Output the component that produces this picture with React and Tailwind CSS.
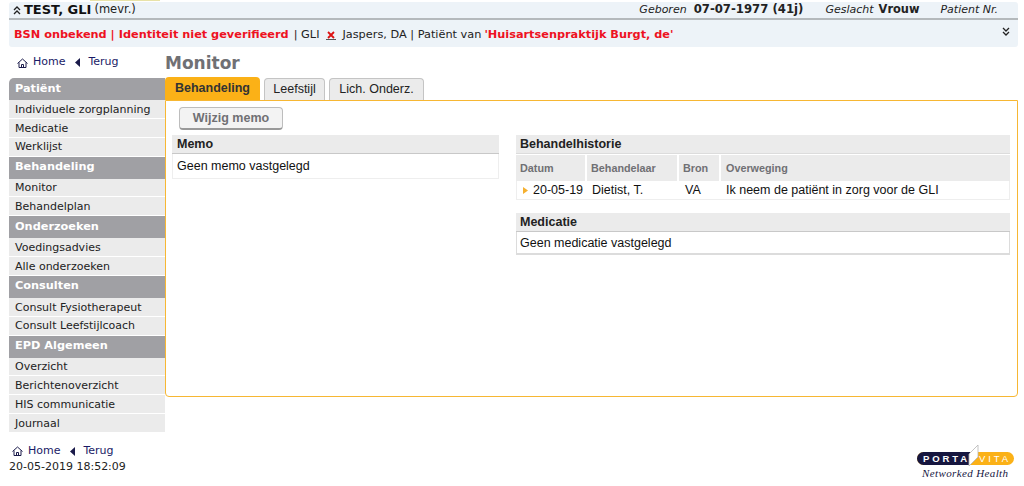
import React from "react";

const verdana = "font-['DejaVu_Sans',sans-serif]";
const arial = "font-['Liberation_Sans',Arial,sans-serif]";

const HomeIcon = () => (
  <svg width="11" height="10" viewBox="0 0 11 10" fill="none" stroke="#1a1a4a" strokeWidth="1">
    <path d="M0.5 5.5 L5.5 1 L10.5 5.5" />
    <path d="M2 4.5 V9.5 H9 V4.5" />
    <path d="M4.5 9.5 V6.5 H6.5 V9.5" />
  </svg>
);

const BackIcon = () => (
  <svg width="5" height="9" viewBox="0 0 5 9" fill="#1a1a4a"><path d="M5 0 V9 L0 4.5 Z" /></svg>
);

const Chevrons = ({ up }) => (
  <svg width="8" height="9" viewBox="0 0 8 9" fill="none" stroke="#222" strokeWidth="1.3">
    {up ? (
      <>
        <path d="M1 4 L4 1 L7 4" />
        <path d="M1 8 L4 5 L7 8" />
      </>
    ) : (
      <>
        <path d="M1 1 L4 4 L7 1" />
        <path d="M1 5 L4 8 L7 5" />
      </>
    )}
  </svg>
);

const nav = [
  ["Patiënt", ["Individuele zorgplanning", "Medicatie", "Werklijst"]],
  ["Behandeling", ["Monitor", "Behandelplan"]],
  ["Onderzoeken", ["Voedingsadvies", "Alle onderzoeken"]],
  ["Consulten", ["Consult Fysiotherapeut", "Consult Leefstijlcoach"]],
  ["EPD Algemeen", ["Overzicht", "Berichtenoverzicht", "HIS communicatie", "Journaal"]],
];

const Links = ({ className }) => (
  <div className={`flex items-center text-[11px] text-[#1a1a66] ${verdana} ${className}`}>
    <HomeIcon />
    <span className="ml-[5px]">Home</span>
    <span className="ml-[10px]"><BackIcon /></span>
    <span className="ml-[8px]">Terug</span>
  </div>
);

const Logo = () => (
  <svg width="98" height="36" viewBox="0 0 98 36">
    <rect x="0" y="8" width="97" height="13" rx="6.5" fill="#fbb117" />
    <path d="M6.5 8 H53 V21 H6.5 A6.5 6.5 0 0 1 6.5 8 Z" fill="#16163f" />
    <path d="M52 10 L61 1 V13 L52 22 Z" fill="#ffffff" stroke="#b5b5b5" strokeWidth="0.8" />
    <text x="6" y="18" fontFamily="Liberation Sans, sans-serif" fontSize="9.5" fontWeight="700" textLength="44" fill="#fff">PORTA</text>
    <text x="62" y="18" fontFamily="Liberation Sans, sans-serif" fontSize="9.5" textLength="29" fill="#fff">VITA</text>
    <text x="5" y="33" fontFamily="Liberation Serif, serif" fontStyle="italic" fontSize="11" textLength="86" fill="#16163f">Networked Health</text>
  </svg>
);

export default function App() {
  return (
    <div className={`w-[1024px] h-[486px] bg-white overflow-hidden relative text-[#222] ${verdana}`}>
      <div className="absolute left-[90px] top-0 w-[70px] h-px bg-[#e8e2a8]" />
      <div className="ml-[9px] mr-[6px] pt-[2px]">
        <div className="h-[16px] bg-[#edf3f8] border-b-2 border-[#b4b9bc] rounded-t-[3px] flex items-center box-content text-[11.5px]">
          <span className="ml-[4px]"><Chevrons up /></span>
          <span className="ml-[3px] font-bold text-[13px] text-[#111]">TEST, GLI</span>
          <span className="ml-[3px]">(mevr.)</span>
          <span className="ml-auto italic text-[11px]">Geboren</span>
          <span className="ml-[7px] font-bold text-[11.7px] text-[#222]">07-07-1977 (41j)</span>
          <span className="ml-[22px] italic text-[11px]">Geslacht</span>
          <span className="ml-[5px] font-bold text-[11.4px]">Vrouw</span>
          <span className="ml-[21px] mr-[20px] italic text-[11px]">Patient Nr.</span>
        </div>
        <div className="h-[27px] bg-[#edf3f8] rounded-b-[3px] flex items-center text-[11.3px] pt-[3px]">
          <span className="ml-[5px] font-bold text-[#ee1122]">BSN onbekend | Identiteit niet geverifieerd</span>
          <span className="ml-[5px]">| GLI</span>
          <span className="ml-[7px] relative w-[10px] h-[10px] flex items-center justify-center border-b border-[#555]">
            <svg width="8" height="8" viewBox="0 0 8 8" stroke="#dd1111" strokeWidth="1.8"><path d="M1 1 L7 7 M7 1 L1 7" /></svg>
          </span>
          <span className="ml-[6px]">Jaspers, DA | Patiënt van</span>
          <span className="ml-[3px] font-bold text-[#ee1122]">'Huisartsenpraktijk Burgt, de'</span>
          <span className="ml-auto mr-[8px] -mt-[7px]"><Chevrons /></span>
        </div>
      </div>

      <div className="flex ml-[9px] mr-[6px] mt-[6px]">
        <div className="w-[156px] shrink-0">
          <Links className="ml-[8px] h-[25px] pb-[6px]" />
          {nav.map(([title, items], i) => (
            <div key={title}>
              <div className={`h-[22px] bg-[#a0a0a4] text-white font-bold text-[11.3px] pl-[6px] flex items-center ${i === 0 ? "rounded-tl-[5px]" : ""}`}>
                {title}
              </div>
              {items.map((it) => (
                <div key={it} className="h-[18.85px] bg-[#ebebeb] border-b border-white pl-[6px] pt-[2px] text-[11px] flex items-center text-[#222]">
                  {it}
                </div>
              ))}
            </div>
          ))}
        </div>

        <div className="flex-1 min-w-0">
          <div className="h-[24px] text-[17px] font-bold text-[#707074] flex items-center leading-none pb-[4px]">Monitor</div>
          <div className={`flex items-end h-[23px] ${arial} text-[12.5px]`}>
            <div className="w-[95px] h-[23px] bg-[#fbb117] rounded-t-[4px] flex items-center justify-center font-bold text-[#333]">
              Behandeling
            </div>
            <div className="ml-[4px] w-[61px] h-[22px] bg-[#ebebeb] border border-b-0 border-[#c4c4c4] rounded-t-[4px] flex items-center justify-center">Leefstijl</div>
            <div className="ml-[4px] w-[95px] h-[22px] bg-[#ebebeb] border border-b-0 border-[#c4c4c4] rounded-t-[4px] flex items-center justify-center">Lich. Onderz.</div>
          </div>
          <div className={`h-[297px] border border-[#f7b733] rounded-b-[4px] ${arial} text-[12.5px] text-[#111] relative`}>
            <div className="ml-[13px] mt-[6px] w-[104px] h-[23px] bg-[#f3f3f3] border border-[#bdbdbd] border-b-2 border-b-[#999] rounded-[4px] flex items-center justify-center font-bold text-[12.5px] text-[#707074]">
              Wijzig memo
            </div>
            <div className="flex mt-[5px] ml-[6px]">
              <div className="w-[327px]">
                <div className="h-[19px] bg-[#ebebeb] border-b border-[#c8c8c8] pl-[5px] font-bold flex items-center text-[#222]">Memo</div>
                <div className="h-[25px] border-x border-b border-[#eeeeee] pl-[4px] flex items-center">Geen memo vastgelegd</div>
              </div>
              <div className="w-[494px] ml-[17px]">
                <div className="h-[19px] bg-[#ebebeb] border-b border-[#dcdcdc] pl-[4px] font-bold flex items-center text-[#222]">Behandelhistorie</div>
                <div className="flex h-[27px] text-[10.8px] font-bold text-[#707074] gap-[2px] pt-[1px] bg-white">
                  <div className="w-[69px] bg-[#ebebeb] pl-[4px] flex items-center">Datum</div>
                  <div className="w-[90px] bg-[#ebebeb] pl-[4px] flex items-center">Behandelaar</div>
                  <div className="w-[40px] bg-[#ebebeb] pl-[4px] flex items-center">Bron</div>
                  <div className="flex-1 bg-[#ebebeb] pl-[5px] flex items-center">Overweging</div>
                </div>
                <div className="flex h-[19px] items-center border-x border-b border-[#eeeeee]">
                  <div className="w-[71px] pl-[6px] flex items-center">
                    <svg width="5" height="7" viewBox="0 0 5 7" fill="#f5b030"><path d="M0 0 L5 3.5 L0 7 Z" /></svg>
                    <span className="ml-[5px]">20-05-19</span>
                  </div>
                  <div className="w-[92px] pl-[4px]">Dietist, T.</div>
                  <div className="w-[42px] pl-[5px]">VA</div>
                  <div className="pl-[4px]">Ik neem de patiënt in zorg voor de GLI</div>
                </div>
                <div className="mt-[13px] h-[19px] bg-[#ebebeb] border-b border-[#c8c8c8] pl-[4px] font-bold flex items-center text-[#222]">Medicatie</div>
                <div className="h-[23px] border-x border-b-2 border-[#dcdcdc] pl-[3px] pt-[1px] flex items-center">Geen medicatie vastgelegd</div>
              </div>
            </div>
          </div>
        </div>
      </div>

      <div className="flex items-start ml-[9px] mr-[6px] mt-[11px]">
        <div>
          <Links className="ml-[3px] h-[15px]" />
          <div className="text-[11px] h-[16px] flex items-center text-[#222]">20-05-2019 18:52:09</div>
        </div>
        <div className="ml-auto mr-[3px]"><Logo /></div>
      </div>
    </div>
  );
}
